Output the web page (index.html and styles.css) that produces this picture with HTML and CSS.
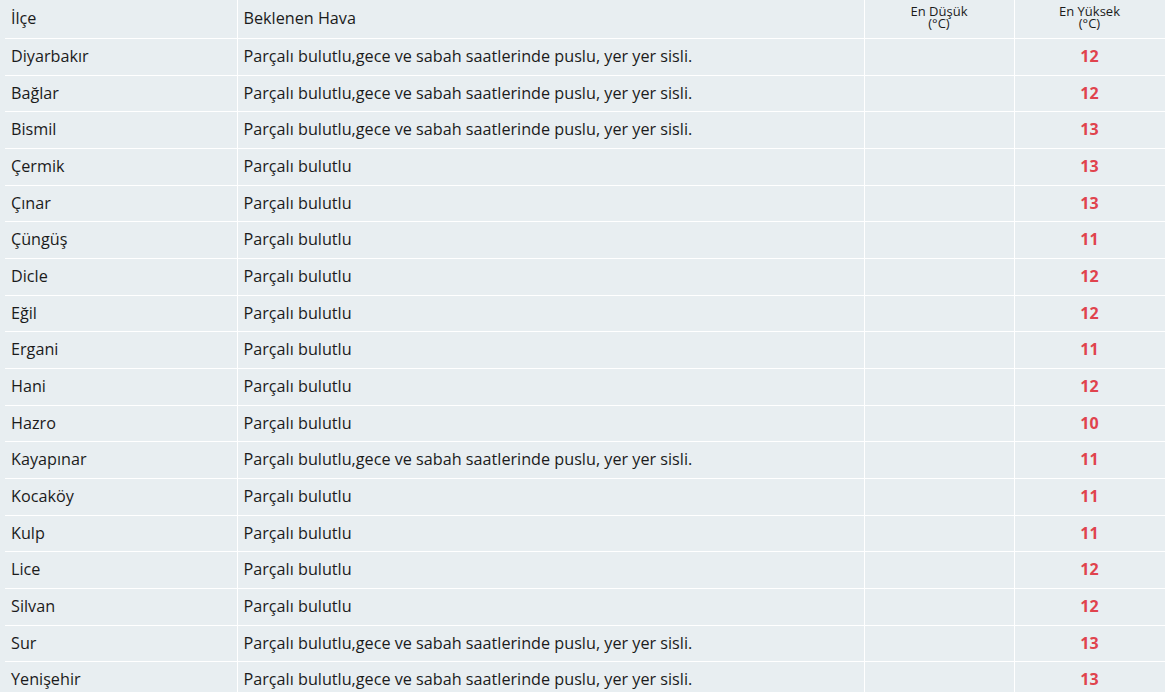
FILE: index.html
```html
<!DOCTYPE html>
<html lang="tr">
<head>
  <meta charset="UTF-8">
  <title>İlçe Tahminleri</title>
  <link rel="stylesheet" href="styles.css">
</head>
<body>
  <table class="forecast">
    <colgroup>
      <col class="col-ilce">
      <col class="col-hava">
      <col class="col-min">
      <col class="col-max">
    </colgroup>
    <thead>
      <tr>
        <th>İlçe</th>
        <th>Beklenen Hava</th>
        <th class="temp-head">En Düşük<br>(°C)</th>
        <th class="temp-head">En Yüksek<br>(°C)</th>
      </tr>
    </thead>
    <tbody>
      <tr><td>Diyarbakır</td><td>Parçalı bulutlu,gece ve sabah saatlerinde puslu, yer yer sisli.</td><td></td><td class="max">12</td></tr>
      <tr><td>Bağlar</td><td>Parçalı bulutlu,gece ve sabah saatlerinde puslu, yer yer sisli.</td><td></td><td class="max">12</td></tr>
      <tr><td>Bismil</td><td>Parçalı bulutlu,gece ve sabah saatlerinde puslu, yer yer sisli.</td><td></td><td class="max">13</td></tr>
      <tr><td>Çermik</td><td>Parçalı bulutlu</td><td></td><td class="max">13</td></tr>
      <tr><td>Çınar</td><td>Parçalı bulutlu</td><td></td><td class="max">13</td></tr>
      <tr><td>Çüngüş</td><td>Parçalı bulutlu</td><td></td><td class="max">11</td></tr>
      <tr><td>Dicle</td><td>Parçalı bulutlu</td><td></td><td class="max">12</td></tr>
      <tr><td>Eğil</td><td>Parçalı bulutlu</td><td></td><td class="max">12</td></tr>
      <tr><td>Ergani</td><td>Parçalı bulutlu</td><td></td><td class="max">11</td></tr>
      <tr><td>Hani</td><td>Parçalı bulutlu</td><td></td><td class="max">12</td></tr>
      <tr><td>Hazro</td><td>Parçalı bulutlu</td><td></td><td class="max">10</td></tr>
      <tr><td>Kayapınar</td><td>Parçalı bulutlu,gece ve sabah saatlerinde puslu, yer yer sisli.</td><td></td><td class="max">11</td></tr>
      <tr><td>Kocaköy</td><td>Parçalı bulutlu</td><td></td><td class="max">11</td></tr>
      <tr><td>Kulp</td><td>Parçalı bulutlu</td><td></td><td class="max">11</td></tr>
      <tr><td>Lice</td><td>Parçalı bulutlu</td><td></td><td class="max">12</td></tr>
      <tr><td>Silvan</td><td>Parçalı bulutlu</td><td></td><td class="max">12</td></tr>
      <tr><td>Sur</td><td>Parçalı bulutlu,gece ve sabah saatlerinde puslu, yer yer sisli.</td><td></td><td class="max">13</td></tr>
      <tr><td>Yenişehir</td><td>Parçalı bulutlu,gece ve sabah saatlerinde puslu, yer yer sisli.</td><td></td><td class="max">13</td></tr>
    </tbody>
  </table>
</body>
</html>
```

FILE: styles.css
```css
body {
  margin: 0;
  background: #e8eef1;
  font-family: 'Open Sans', sans-serif;
  color: #1b1b1b;
}

.forecast {
  margin-left: 5px;
  width: 1160px;
  border-collapse: collapse;
  table-layout: fixed;
  font-size: 16.2px;
}

.col-ilce { width: 232px; }
.col-hava { width: 627px; }
.col-min { width: 150px; }
.col-max { width: 151px; }

.forecast th,
.forecast td {
  border: 1px solid #fff;
  padding: 7px 6px;
  line-height: 21.67px;
  text-align: left;
  vertical-align: middle;
}

.forecast tr > :first-child {
  border-left: none;
}

.forecast thead th {
  border-top: none;
  font-weight: 400;
  height: 30px;
  padding-top: 4px;
  padding-bottom: 4px;
}

.forecast th.temp-head {
  text-align: center;
  font-size: 13px;
  line-height: 12px;
  padding-top: 2px;
  padding-bottom: 6px;
}

.forecast td.max {
  text-align: center;
  color: #e0434d;
  font-weight: 700;
  font-size: 16px;
}
```
